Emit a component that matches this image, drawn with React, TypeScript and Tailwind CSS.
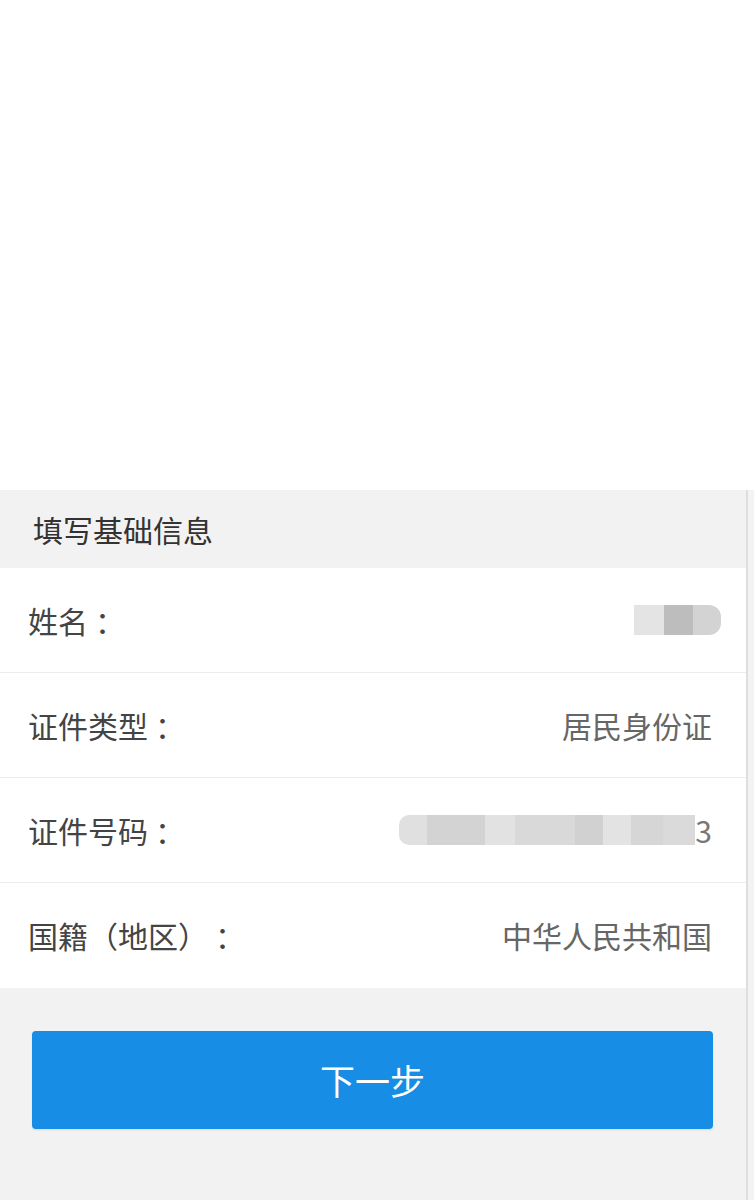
const font = { fontFamily: '"Noto Sans CJK SC", "Noto Sans", sans-serif' };

const rows = [
  { label: "姓名", value: "name" },
  { label: "证件类型", value: "居民身份证" },
  { label: "证件号码", value: "id" },
  { label: "国籍（地区）", value: "中华人民共和国" },
];

function NameBlur() {
  return (
    <div className="flex h-[30px] mr-[-9px]">
      <div className="w-[30px] bg-[#e4e4e4]" />
      <div className="w-[29px] bg-[#bdbdbd]" />
      <div className="w-[28px] bg-[#d3d3d3] rounded-r-[12px]" />
    </div>
  );
}

function IdBlur() {
  return (
    <div className="flex items-center">
      <div className="flex h-[30px]">
        <div className="w-[28px] bg-[#e0e0e0] rounded-l-[10px]" />
        <div className="w-[58px] bg-[#d3d3d3]" />
        <div className="w-[30px] bg-[#e2e2e2]" />
        <div className="w-[60px] bg-[#d9d9d9]" />
        <div className="w-[28px] bg-[#d1d1d1]" />
        <div className="w-[28px] bg-[#e3e3e3]" />
        <div className="w-[32px] bg-[#d6d6d6]" />
        <div className="w-[32px] bg-[#dadada]" />
      </div>
      <span className="text-[30px] text-[#777] leading-none">3</span>
    </div>
  );
}

export default function App() {
  return (
    <div lang="zh-CN" className="w-[754px] h-[1200px] bg-white flex flex-col [text-spacing-trim:space-all]" style={font}>
      <div className="h-[490px] bg-white" />
      <div className="flex-1 flex bg-[#f3f3f3]">
        <div className="w-[748px] border-r-2 border-[#dedede] bg-[#f2f2f2] flex flex-col">
          {/* section title */}
          <div className="h-[78px] flex items-center pl-[33px] text-[30px] text-[#333]">
            填写基础信息
          </div>
          {rows.map((r, i) => (
            <div
              key={r.label}
              className={
                "h-[105px] bg-white flex items-center justify-between pl-[28px] pr-[34px] " +
                (i < rows.length - 1 ? "border-b border-[#ececec]" : "")
              }
            >
              <span className="text-[30px] text-[#444]">
                {r.label}
                <span className="inline-block w-[30px] ml-[7px] text-center">：</span>
              </span>
              {r.value === "name" ? (
                <NameBlur />
              ) : r.value === "id" ? (
                <IdBlur />
              ) : (
                <span className="text-[30px] text-[#666]">{r.value}</span>
              )}
            </div>
          ))}
          <div className="pt-[43px] pl-[32px] pr-[33px]">
            <button className="w-full h-[98px] rounded-[4px] bg-[#178de6] text-white text-[35px] shadow-[0_1px_2px_rgba(0,0,0,0.1)]">
              下一步
            </button>
          </div>
        </div>
      </div>
    </div>
  );
}
